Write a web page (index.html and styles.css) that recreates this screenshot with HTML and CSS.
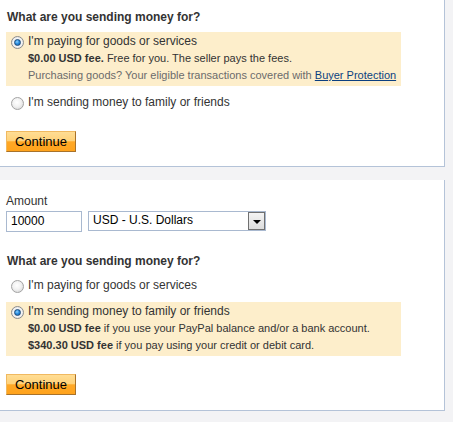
FILE: index.html
```html
<!DOCTYPE html>
<html>
<head>
<meta charset="utf-8">
<link rel="stylesheet" href="styles.css">
</head>
<body>
<div class="panel panel-top">
  <h3 class="heading">What are you sending money for?</h3>
  <div class="option selected">
    <div class="opt-row"><span class="radio checked"></span><span class="opt-label">I'm paying for goods or services</span></div>
    <div class="opt-sub"><b>$0.00 USD fee.</b> Free for you. The seller pays the fees.</div>
    <div class="opt-sub muted">Purchasing goods? Your eligible transactions covered with <a href="#" class="link">Buyer Protection</a></div>
  </div>
  <div class="option gap7">
    <div class="opt-row"><span class="radio"></span><span class="opt-label">I'm sending money to family or friends</span></div>
  </div>
  <button class="btn">Continue</button>
</div>

<div class="panel panel-bottom">
  <div class="label">Amount</div>
  <div class="amount-row">
    <div class="input">10000</div>
    <div class="select"><span class="select-text">USD - U.S. Dollars</span><span class="select-arrow"><span class="tri"></span></span></div>
  </div>
  <h3 class="heading heading2">What are you sending money for?</h3>
  <div class="option">
    <div class="opt-row"><span class="radio"></span><span class="opt-label">I'm paying for goods or services</span></div>
  </div>
  <div class="option selected gap6">
    <div class="opt-row"><span class="radio checked"></span><span class="opt-label">I'm sending money to family or friends</span></div>
    <div class="opt-sub"><b>$0.00 USD fee</b> if you use your PayPal balance and/or a bank account.</div>
    <div class="opt-sub"><b>$340.30 USD fee</b> if you pay using your credit or debit card.</div>
  </div>
  <button class="btn">Continue</button>
</div>
</body>
</html>
```

FILE: styles.css
```css
html, body {
  margin: 0;
  padding: 0;
  background: #f3f3f5;
  font-family: "Liberation Sans", Arial, sans-serif;
  color: #333;
  font-size: 12px;
}

.panel {
  width: 445px;
  background: #fff;
  border-right: 1px solid #b4c3d8;
  border-bottom: 1px solid #b4c3d8;
  padding: 9px 0 14px 0;
  box-sizing: border-box;
}

.panel-top {
  height: 167px;
}

.panel-bottom {
  margin-top: 13px;
  height: 231px;
  padding-top: 14px;
}

.heading {
  margin: 0 0 7px 7px;
  font-size: 12px;
  line-height: 16px;
  font-weight: bold;
  color: #333;
}

.heading2 {
  margin-top: 21px;
}

.option {
  margin-left: 6px;
  width: 395px;
  padding: 1px 0 2px 0;
}

.gap7 { margin-top: 7px; }
.gap6 { margin-top: 6px; }

.selected {
  background: #fdeecb;
}

.opt-row {
  display: flex;
  align-items: center;
  height: 17px;
  line-height: 17px;
}

.radio {
  width: 13px;
  height: 13px;
  box-sizing: border-box;
  margin: 1px 4px 0 5px;
  border-radius: 50%;
  border: 1px solid #a3a3a3;
  background: radial-gradient(circle at 45% 40%, #ffffff 0%, #f2f2f2 45%, #cfcfcf 100%);
  display: flex;
  align-items: center;
  justify-content: center;
  flex: none;
}

.radio.checked {
  border-color: #8c8c8c;
  background: radial-gradient(circle at 50% 50%, #ffffff 0%, #f4f4f4 55%, #cdcdcd 100%);
}

.radio.checked::after {
  content: "";
  width: 7px;
  height: 7px;
  box-sizing: border-box;
  border-radius: 50%;
  border: 1px solid #1d4a7a;
  background: radial-gradient(circle at 40% 35%, #8fd0ff 0%, #2a8fe0 45%, #0b5aa8 100%);
}

.opt-label {
  font-size: 12px;
  color: #333;
}

.opt-sub {
  padding-left: 28px;
  margin-left: -6px;
  font-size: 11px;
  line-height: 17px;
  color: #333;
}

.opt-sub b {
  font-weight: bold;
}

.muted {
  color: #6b6b6b;
}

.link {
  color: #0b3f80;
  text-decoration: underline;
}

.btn {
  display: block;
  margin: 18px 0 0 6px;
  width: 70px;
  height: 21px;
  padding: 0;
  box-sizing: border-box;
  font-family: "Liberation Sans", Arial, sans-serif;
  font-size: 13px;
  color: #000;
  border: 1px solid;
  border-color: #f0b960 #a8722a #a8722a #f0b960;
  background: linear-gradient(#ffdd94 0%, #ffd27a 45%, #ffa826 52%, #ffa31c 100%);
  line-height: 18px;
  cursor: pointer;
}

.label {
  margin-left: 6px;
  font-size: 12px;
  line-height: 15px;
  color: #333;
}

.amount-row {
  display: flex;
  align-items: flex-start;
  margin: 2px 0 0 6px;
  gap: 6px;
}

.input {
  width: 76px;
  height: 21px;
  box-sizing: border-box;
  border: 1px solid #a9b9d0;
  padding-left: 4px;
  font-size: 12px;
  line-height: 19px;
  color: #000;
}

.select {
  width: 178px;
  height: 20px;
  box-sizing: border-box;
  border: 1px solid #a9b9d0;
  display: flex;
  align-items: stretch;
  justify-content: space-between;
}

.select-text {
  padding-left: 4px;
  font-size: 12px;
  line-height: 17px;
  color: #000;
}

.select-arrow {
  width: 17px;
  box-sizing: border-box;
  border: 1px solid #707070;
  background: linear-gradient(#f4f4f4, #dcdcdc);
  display: flex;
  align-items: center;
  justify-content: center;
}

.tri {
  width: 0;
  height: 0;
  border-left: 4px solid transparent;
  border-right: 4px solid transparent;
  border-top: 4px solid #000;
  margin-top: 1px;
}
```
